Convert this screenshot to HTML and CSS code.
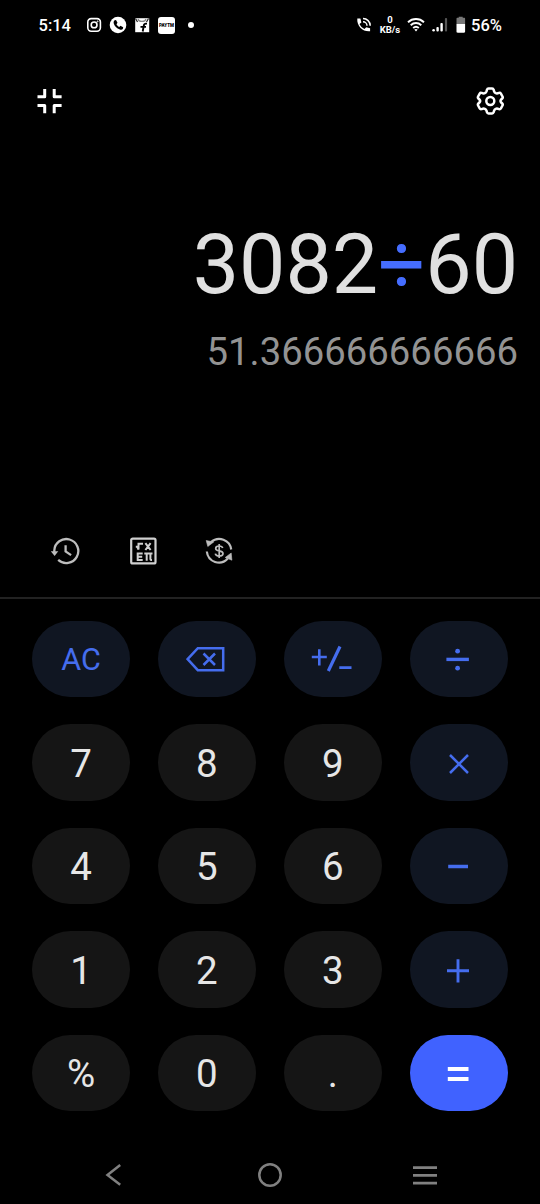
FILE: index.html
```html
<!DOCTYPE html>
<html lang="en">
<head>
<meta charset="utf-8">
<title>Calculator</title>
<link rel="stylesheet" href="styles.css">
</head>
<body>
<div class="phone">
  <header class="status">
    <span class="clock">5:14</span>
    <svg class="s-insta" width="16" height="16" viewBox="0 0 16 16" fill="none" stroke="#fff" stroke-width="1.6"><rect x="1.8" y="1.6" width="12.6" height="12.6" rx="3.4"/><circle cx="8.1" cy="7.9" r="2.9"/><circle cx="11.6" cy="4.4" r=".5" stroke-width="1"/></svg>
    <svg class="s-call" width="18" height="18" viewBox="0 0 18 18"><circle cx="9" cy="9" r="8.3" fill="#fff"/><path d="M5.7 4.3 7 4l1.5 2.8-1 1.4c.6 1.3 1.5 2.1 2.7 2.7l1.3-1.2 2.7 1.5-.3 1.5c-.5 1-1.8 1.2-3 .8C7.7 12.5 5.3 10 4.7 7.2c-.2-1.3.1-2.4 1-2.9Z" fill="#000"/></svg>
    <svg class="s-flip" width="16" height="16" viewBox="0 0 16 16"><path d="M1.200 1.200h14v14h-14z" fill="#fff"/><path d="M4 2c.8 3.200 7.200 3.200 8 0" fill="none" stroke="#888" stroke-width="1.200"/><path d="M1.500 1.500 3.500 5M14.500 1.500l-2 3.500" stroke="#222" stroke-width="1.200"/><path d="M13 6.600h-1c-1.400 0-2 .7-2.200 2L8.700 14.500M6.500 9.900h5.500" fill="none" stroke="#000" stroke-width="1.900"/></svg>
    <span class="s-paytm">PAYTM</span>
    <i class="s-dot"></i>
    <span class="gap"></span>
    <svg class="s-phone" width="16" height="16" viewBox="0 0 16 16"><path d="M1.300 1.500h3.100l1 3.900-1.900 1.700c1 2.200 2.700 3.900 5 5l1.700-1.900 3.900 1v3.100c-7 .8-13.500-5-12.800-12.800Z" fill="#fff"/><path d="M7 1.600c4 0 7.200 3 7.200 7.100M7 4.800c2.200 0 4 1.700 4 3.900" fill="none" stroke="#fff" stroke-width="1.500"/></svg>
    <span class="rate"><b>0</b><b>KB/s</b></span>
    <svg class="s-wifi" width="18" height="16" viewBox="0 0 18 16" fill="none" stroke="#fff" stroke-width="1.900"><path d="M1 5.200c4.600-4.300 11.400-4.300 16 0M3.700 8.200c3.100-2.900 7.500-2.900 10.600 0M6.200 11c1.700-1.500 3.900-1.500 5.600 0"/><path d="m7.300 12.500 1.700 1.900 1.700-1.900c-1-.8-2.400-.8-3.400 0Z" fill="#fff" stroke="none"/></svg>
    <svg class="s-signal" width="17" height="16" viewBox="0 0 17 16" fill="#fff"><circle cx="1.600" cy="13.300" r="1.300"/><rect x="4.400" y="10" width="2.400" height="4.500" rx="1"/><rect x="8.400" y="6" width="2.400" height="8.500" rx="1"/><rect x="12.900" y="1" width="2.200" height="13.500" rx="1" fill="#555"/></svg>
    <svg class="s-battery" width="10" height="18" viewBox="0 0 10 18"><path d="M2.700.7h4v1.100h1.400c.6 0 1 .4 1 1V8H.5V2.800c0-.6.4-1 1-1h1.200Z" fill="#777"/><path d="M.5 8h8.600v7.500c0 .8-.5 1.200-1.200 1.200H1.700C1 16.700.5 16.300.5 15.500Z" fill="#fff"/></svg>
    <span class="percent">56%</span>
  </header>

  <div class="toolbar">
    <svg width="26" height="26" viewBox="0 0 26 26" fill="none" stroke="#fff" stroke-width="3" stroke-linejoin="round"><path d="M.5 8.800h7.200V.9M17.200.9v7.900h7.400M.5 17.400h7.200v7.800M17.200 25.200v-7.800h7.400"/></svg>
    <svg width="28" height="28" viewBox="0 0 28 28" fill="none" stroke="#fff" stroke-width="2.500" stroke-linejoin="round"><path d="M12.500 1.500h3.600q1.200 0 1.500 1.200l.5 1.700q.4 1.200 1.500 1.600 1 .6 2.100.3l1.400-.4q1.200-.3 1.800.7l1.600 2.900q.6 1.100-.3 2l-1 1q-1.500 1.500 0 3l1 1q.9.900.3 2l-1.600 2.900q-.6 1-1.800.7l-1.400-.4q-1.100-.3-2.100.3-1.100.4-1.500 1.600l-.5 1.700q-.3 1.200-1.500 1.200h-3.600q-1.200 0-1.500-1.200l-.5-1.700q-.4-1.200-1.500-1.600-1-.6-2.100-.3l-1.400.4q-1.200.3-1.800-.7l-1.600-2.900q-.6-1.100.3-2l1-1q1.500-1.500 0-3l-1-1q-.9-.9-.3-2l1.600-2.900q.6-1 1.800-.7l1.400.4q1.100.3 2.100-.3 1.100-.4 1.500-1.600l.5-1.700q.3-1.200 1.500-1.200Z"/><circle cx="14.300" cy="14" r="4"/></svg>
  </div>

  <main class="display">
    <div class="expression">3082<span class="operator">÷</span>60</div>
    <div class="result">51.366666666666</div>
  </main>

  <div class="modes">
    <svg width="30" height="28" viewBox="0 0 30 28" fill="none" stroke="#bdbdbd" stroke-width="2.300"><path d="M4.300 15.500V13.500A12 12 0 1 1 8.200 22.900"/><path d="M.8 14.300h7.500l-3.700 4.800Z" fill="#bdbdbd" stroke="none"/><path d="M15.600 8.300v6.200l5.500 3.600"/></svg>
    <svg width="28" height="28" viewBox="0 0 28 28" fill="none" stroke="#d0d0d0" stroke-width="2"><rect x="2.200" y="1.600" width="24.300" height="24.800" rx="1.500" stroke-width="2.200"/><path d="M6.800 9.800h1.500l1.200 2.700V6.800h4.500M16.400 6.200l5.200 6.800M21.600 6.200l-5.200 6.800" stroke-width="2"/><path d="M13.700 16.500H8.700v6.500h5M8.700 19.700h4.500M15.300 16.500h8.200M17.700 17v6.800M21.400 17v5.100q0 .9 1.600.8" stroke-width="2"/></svg>
    <svg width="28" height="28" viewBox="0 0 28 28" fill="none" stroke="#bdbdbd" stroke-width="2.200"><path d="M5.800 5.300C13.500-1.500 25 3 26.200 12.500M1.800 14.500C3 25 15.500 29.500 22.800 21.500"/><path d="M1.200 3.500 8.700 5 2.800 9.500ZM20.200 20.500l6-4.500.7 7.200Z" fill="#bdbdbd" stroke="#bdbdbd" stroke-width=".6"/><path d="M17.700 11c-.4-1.300-1.700-2-3.500-2-2.200 0-3.500.9-3.500 2.400 0 3.700 7.300 1.300 7.300 5.100 0 1.600-1.600 2.500-3.800 2.500-2.100 0-3.600-.8-3.900-2.400M14.200 7v14" stroke-width="1.700"/></svg>
  </div>

  <div class="keypad">
    <button class="key fn ac">AC</button>
    <button class="key fn" aria-label="Backspace"><svg width="40" height="28" viewBox="0 0 40 28"><path d="M11.800 3.200h25.400v22H11.800L1.600 14.200Z"/><path d="m17.500 8.500 11.500 11.500M29 8.500 17.500 20"/></svg></button>
    <button class="key fn" aria-label="Plus minus"><svg width="42" height="28" viewBox="0 0 42 28"><path d="M.8 12h15M8.300 4.200v16.200M28.300 22.600h12.200" stroke-width="2.600"/><path d="M29 1.500 17.300 26" stroke-width="3.200"/></svg></button>
    <button class="key fn" aria-label="Divide"><svg width="28" height="28" viewBox="0 0 28 28"><path d="M2.400 14.400h22.500" stroke-width="3.400"/><circle class="dot" cx="13.600" cy="6.200" r="2.400"/><circle class="dot" cx="13.600" cy="23.200" r="2.400"/></svg></button>
    <button class="key">7</button>
    <button class="key">8</button>
    <button class="key">9</button>
    <button class="key fn" aria-label="Multiply"><svg width="28" height="28" viewBox="0 0 28 28"><path d="m6 6 18 18M24 6 6 24" stroke-width="2.500"/></svg></button>
    <button class="key">4</button>
    <button class="key">5</button>
    <button class="key">6</button>
    <button class="key fn" aria-label="Subtract"><svg width="28" height="28" viewBox="0 0 28 28"><path d="M4.200 14.500H24" stroke-width="3.500"/></svg></button>
    <button class="key">1</button>
    <button class="key">2</button>
    <button class="key">3</button>
    <button class="key fn" aria-label="Add"><svg width="28" height="28" viewBox="0 0 28 28"><path d="M3 14.800h22M14 3.200v23.300" stroke-width="2.900"/></svg></button>
    <button class="key">%</button>
    <button class="key">0</button>
    <button class="key">.</button>
    <button class="key equals" aria-label="Equals"><svg width="28" height="28" viewBox="0 0 28 28"><path d="M3.800 10h20.700M3.800 20h20.700" stroke-width="4"/></svg></button>
  </div>

  <nav class="nav">
    <svg width="24" height="24" viewBox="0 0 24 24"><path d="M17.200 2 4.500 12l12.700 9.800" stroke-width="2.500"/></svg>
    <svg width="24" height="24" viewBox="0 0 24 24"><circle cx="12" cy="12" r="10.700" stroke-width="2.500"/></svg>
    <svg width="24" height="24" viewBox="0 0 24 24"><path d="M0 4.600h24M0 12.300h24M0 20.200h24" stroke-width="2.700"/></svg>
  </nav>
</div>
</body>
</html>
```

FILE: styles.css
```css
* { box-sizing: border-box; }
body { margin: 0; background: #000; font-family: Roboto, "Liberation Sans", sans-serif; }
svg { display: block; flex: none; }
.phone { width: 540px; height: 1204px; background: #000; overflow: hidden; display: flex; flex-direction: column; }

.status { height: 50px; flex: none; display: flex; align-items: center; padding: 0 38px 0 38.500px; color: #fff; }
.clock, .percent { font-size: 16.500px; font-weight: 500; line-height: 20px; padding-top: 1px; }
.clock { width: 47px; }
.percent { width: 31px; white-space: nowrap; }
.s-call { margin-left: 7.500px; }
.s-flip { margin-left: 7px; }
.s-paytm { margin-left: 8px; width: 17px; height: 17px; border-radius: 3px; background: #fff; color: #000; font-size: 4.500px; font-weight: 900; line-height: 17px; text-align: center; }
.s-dot { margin-left: 13px; width: 6px; height: 6px; border-radius: 50%; background: #fff; }
.gap { flex: 1; }
.rate { display: flex; flex-direction: column; align-items: center; width: 22px; margin-left: 7px; font-size: 9.500px; line-height: 10px; }
.rate b { font-weight: 700; }
.s-wifi { margin-left: 6px; }
.s-signal { margin-left: 7px; }
.s-battery { margin-left: 7px; margin-right: 5px; }

.toolbar { height: 102px; flex: none; display: flex; justify-content: space-between; align-items: center; padding: 0 36px 0 37px; }
.display { height: 368px; flex: none; padding: 64px 22px 0 0; text-align: right; }
.expression { font-size: 82.500px; line-height: 98px; color: #e0e0e0; }
.operator { color: #456dff; }
.result { font-size: 38.300px; line-height: 46px; margin-top: 15px; color: #939393; }
.modes { height: 79px; flex: none; display: flex; gap: 48.500px; padding: 17px 0 0 50px; border-bottom: 2px solid #222; }

.keypad { display: grid; grid-template-columns: repeat(4, 98px); column-gap: 27.900px; grid-auto-rows: 76.300px; row-gap: 27.200px; padding: 22px 0 0 32px; }
.key { border: 0; border-radius: 39px; background: #151515; color: #e6e6e6; font: 400 38.500px/46px Roboto, sans-serif; padding: 2px 0 0; display: flex; align-items: center; justify-content: center; }
.key svg { fill: none; stroke: #456dee; stroke-width: 2.500; margin: -2px 1px 0 0; }
.key .dot { fill: #456dee; stroke: none; }
.fn { background: #101622; color: #456dee; }
.ac { font-size: 30.500px; padding-top: 1px; }
.equals { background: #4062ff; }
.equals svg { stroke: #fff; }
.nav { display: flex; gap: 131px; padding: 51.500px 0 0 103px; }
.nav svg { fill: none; stroke: #808080; }
```
